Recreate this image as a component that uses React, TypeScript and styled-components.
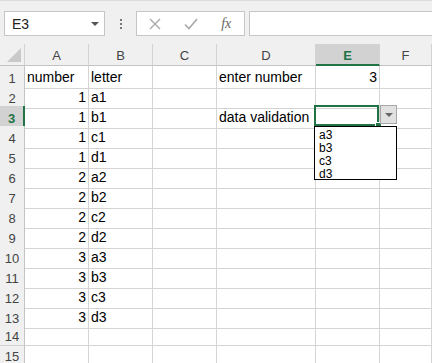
import React from 'react';
import styled, { createGlobalStyle } from 'styled-components';

const GlobalStyle = createGlobalStyle`
  html, body {
    margin: 0;
    padding: 0;
    background: #ffffff;
  }

  body {
    width: 432px;
    height: 363px;
    overflow: hidden;
    font-family: "Liberation Sans", Arial, sans-serif;
  }
`;

const COLS = '25px 64px 64px 64px 99px 64px 1fr';

type Align = 'left' | 'right';

interface CellData {
  text?: string;
  align?: Align;
}

// each row: [A, B, C, D, E, F]
const rows: CellData[][] = [
  [{ text: 'number' }, { text: 'letter' }, {}, { text: 'enter number' }, { text: '3', align: 'right' }, {}],
  [{ text: '1', align: 'right' }, { text: 'a1' }, {}, {}, {}, {}],
  [{ text: '1', align: 'right' }, { text: 'b1' }, {}, { text: 'data validation' }, {}, {}],
  [{ text: '1', align: 'right' }, { text: 'c1' }, {}, {}, {}, {}],
  [{ text: '1', align: 'right' }, { text: 'd1' }, {}, {}, {}, {}],
  [{ text: '2', align: 'right' }, { text: 'a2' }, {}, {}, {}, {}],
  [{ text: '2', align: 'right' }, { text: 'b2' }, {}, {}, {}, {}],
  [{ text: '2', align: 'right' }, { text: 'c2' }, {}, {}, {}, {}],
  [{ text: '2', align: 'right' }, { text: 'd2' }, {}, {}, {}, {}],
  [{ text: '3', align: 'right' }, { text: 'a3' }, {}, {}, {}, {}],
  [{ text: '3', align: 'right' }, { text: 'b3' }, {}, {}, {}, {}],
  [{ text: '3', align: 'right' }, { text: 'c3' }, {}, {}, {}, {}],
  [{ text: '3', align: 'right' }, { text: 'd3' }, {}, {}, {}, {}],
  [{}, {}, {}, {}, {}, {}],
  [{}, {}, {}, {}, {}, {}],
];

const columns = ['A', 'B', 'C', 'D', 'E', 'F'];
const options = ['a3', 'b3', 'c3', 'd3'];

function App() {
  return (
    <>
      <GlobalStyle />
      <Window>
        <Toolbar>
          <NameBox>
            <span>E3</span>
            <NameArrow />
          </NameBox>
          <Grip>
            <i />
            <i />
            <i />
          </Grip>
          <ButtonGroup>
            <BarButton>
              <svg width="12" height="12" viewBox="0 0 12 12">
                <path d="M1 1 L11 11 M11 1 L1 11" stroke="#a8a8a8" strokeWidth="1.4" fill="none" />
              </svg>
            </BarButton>
            <BarButton>
              <svg width="14" height="12" viewBox="0 0 14 12">
                <path d="M1 6.5 L5 10.5 L13 1" stroke="#a8a8a8" strokeWidth="1.6" fill="none" />
              </svg>
            </BarButton>
            <FxButton>fx</FxButton>
          </ButtonGroup>
          <FormulaInput />
        </Toolbar>

        <Sheet>
          <Row $head>
            <Corner>
              <svg width="14" height="14" viewBox="0 0 14 14">
                <polygon points="14,0 14,14 0,14" fill="#c9c9c9" />
              </svg>
            </Corner>
            {columns.map((c) => (
              <ColHead key={c} $active={c === 'E'}>
                {c}
              </ColHead>
            ))}
          </Row>

          {rows.map((cells, r) => (
            <Row key={r}>
              <RowHead $active={r === 2}>{r + 1}</RowHead>
              {cells.map((cell, c) => {
                const isSelected = r === 2 && c === 4;
                return (
                  <Cell key={c} $align={cell.align ?? 'left'}>
                    {cell.text}
                    {isSelected && (
                      <>
                        <Selection>
                          <FillHandle />
                        </Selection>
                        <DropButton>
                          <DropArrow />
                        </DropButton>
                        <OptionList>
                          {options.map((o) => (
                            <OptionItem key={o}>{o}</OptionItem>
                          ))}
                        </OptionList>
                      </>
                    )}
                  </Cell>
                );
              })}
            </Row>
          ))}
        </Sheet>
      </Window>
    </>
  );
}

export default App;

const Window = styled.div`
  width: 432px;
  height: 363px;
  overflow: hidden;
  display: flex;
  flex-direction: column;
  background: #ffffff;
`;

const Toolbar = styled.div`
  height: 44px;
  box-sizing: border-box;
  flex-shrink: 0;
  background: #f0f0f0;
  border-top: 1px solid #dcdcdc;
  padding-top: 10px;

  display: flex;
  align-items: flex-start;
`;

const NameBox = styled.div`
  width: 101px;
  height: 25px;
  box-sizing: border-box;
  margin-left: 4px;
  background: #ffffff;
  border: 1px solid #c6c6c6;
  padding-left: 7px;

  display: flex;
  align-items: center;
  justify-content: space-between;

  span {
    font-size: 14px;
    color: #222222;
  }
`;

const NameArrow = styled.i`
  width: 0;
  height: 0;
  margin-right: 5px;
  border-left: 4px solid transparent;
  border-right: 4px solid transparent;
  border-top: 4px solid #555555;
`;

const Grip = styled.div`
  width: 31px;
  height: 25px;

  display: flex;
  flex-direction: column;
  align-items: center;
  justify-content: center;
  gap: 2px;

  i {
    width: 2px;
    height: 2px;
    background: #777777;
  }
`;

const ButtonGroup = styled.div`
  width: 109px;
  height: 25px;
  box-sizing: border-box;
  background: #ffffff;
  border: 1px solid #c6c6c6;

  display: flex;
  align-items: center;
`;

const BarButton = styled.div`
  width: 36px;
  height: 23px;

  display: flex;
  align-items: center;
  justify-content: center;
`;

const FxButton = styled.div`
  width: 36px;
  height: 23px;
  font-family: "Liberation Serif", "Times New Roman", serif;
  font-style: italic;
  font-size: 14px;
  color: #666666;

  display: flex;
  align-items: center;
  justify-content: center;
`;

const FormulaInput = styled.div`
  flex: 1;
  height: 25px;
  box-sizing: border-box;
  margin-left: 4px;
  background: #ffffff;
  border: 1px solid #c6c6c6;
  border-right: none;
`;

const Sheet = styled.div`
  display: flex;
  flex-direction: column;
`;

const Row = styled.div<{ $head?: boolean }>`
  display: grid;
  grid-template-columns: ${COLS};
  height: ${(p) => (p.$head ? '22px' : '20px')};
  background: ${(p) => (p.$head ? '#f0f0f0' : '#ffffff')};
`;

const Corner = styled.div`
  box-sizing: border-box;
  border-right: 1px solid #d4d4d4;
  border-bottom: 1px solid #c4c4c4;
  padding: 0 3px 3px 0;

  display: flex;
  align-items: flex-end;
  justify-content: flex-end;
`;

const ColHead = styled.div<{ $active?: boolean }>`
  box-sizing: border-box;
  background: ${(p) => (p.$active ? '#d2d2d2' : '#f0f0f0')};
  border-right: 1px solid #d4d4d4;
  border-bottom: ${(p) => (p.$active ? '2px solid #217346' : '1px solid #c4c4c4')};
  color: ${(p) => (p.$active ? '#217346' : '#444444')};
  font-weight: ${(p) => (p.$active ? 'bold' : 'normal')};
  font-size: 13px;
  padding-top: 2px;

  display: flex;
  align-items: center;
  justify-content: center;
`;

const RowHead = styled.div<{ $active?: boolean }>`
  box-sizing: border-box;
  background: ${(p) => (p.$active ? '#d2d2d2' : '#f0f0f0')};
  border-right: ${(p) => (p.$active ? '2px solid #217346' : '1px solid #c4c4c4')};
  border-bottom: 1px solid #d4d4d4;
  color: ${(p) => (p.$active ? '#217346' : '#444444')};
  font-weight: ${(p) => (p.$active ? 'bold' : 'normal')};
  font-size: 13px;
  padding-top: 2px;

  display: flex;
  align-items: center;
  justify-content: center;
`;

const Cell = styled.div<{ $align: Align }>`
  position: relative;
  box-sizing: border-box;
  border-right: 1px solid #d4d4d4;
  border-bottom: 1px solid #d4d4d4;
  padding: 0 2px;
  font-size: 14px;
  line-height: 22px;
  color: #000000;
  white-space: nowrap;
  text-align: ${(p) => p.$align};
`;

const Selection = styled.div`
  position: absolute;
  left: -2px;
  top: -1px;
  width: 65px;
  height: 21px;
  box-sizing: border-box;
  border: 2px solid #217346;
  z-index: 2;
`;

const FillHandle = styled.div`
  position: absolute;
  right: -4px;
  bottom: -4px;
  width: 5px;
  height: 5px;
  background: #217346;
  border: 1px solid #ffffff;
  border-right: none;
  border-bottom: none;
`;

const DropButton = styled.div`
  position: absolute;
  left: 64px;
  top: -1px;
  width: 17px;
  height: 19px;
  box-sizing: border-box;
  background: #e1e1e1;
  border: 1px solid #a8a8a8;
  z-index: 3;

  display: flex;
  align-items: center;
  justify-content: center;
`;

const DropArrow = styled.i`
  width: 0;
  height: 0;
  border-left: 4px solid transparent;
  border-right: 4px solid transparent;
  border-top: 4px solid #666666;
`;

const OptionList = styled.div`
  position: absolute;
  left: -2px;
  top: 20px;
  width: 83px;
  height: 54px;
  box-sizing: border-box;
  background: #ffffff;
  border: 1px solid #000000;
  padding: 2px 0 0 4px;
  z-index: 4;

  display: flex;
  flex-direction: column;
`;

const OptionItem = styled.div`
  font-size: 12px;
  line-height: 13px;
  color: #000000;
  text-align: left;
`;
